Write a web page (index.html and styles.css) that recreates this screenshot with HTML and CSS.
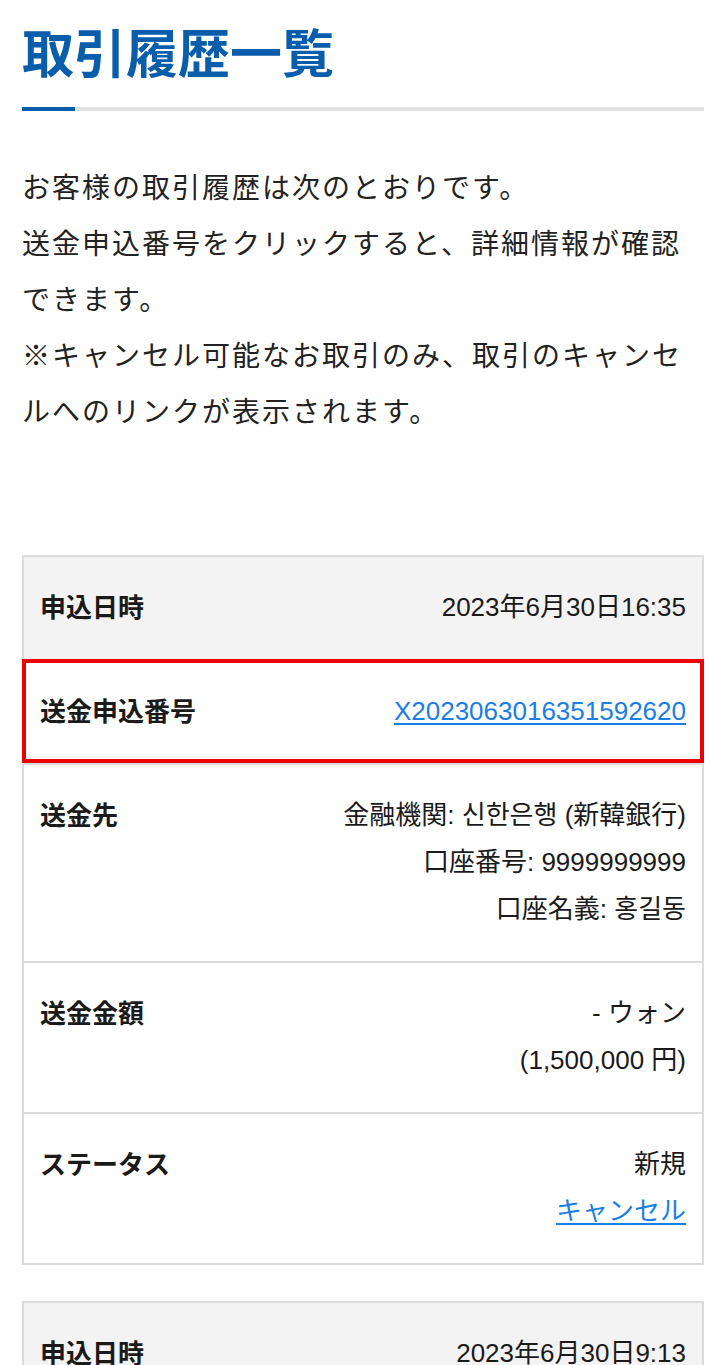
FILE: index.html
```html
<!DOCTYPE html>
<html lang="ja">
<head>
<meta charset="utf-8">
<title>取引履歴一覧</title>
<link rel="stylesheet" href="styles.css">
</head>
<body>
<main class="page">
  <h1 class="title">取引履歴一覧</h1>
  <p class="intro">お客様の取引履歴は次のとおりです。<br>送金申込番号をクリックすると、詳細情報が確認できます。<br>※キャンセル可能なお取引のみ、取引のキャンセルへのリンクが表示されます。</p>

  <section class="card">
    <div class="row row-head">
      <div class="label">申込日時</div>
      <div class="value">2023年6月30日16:35</div>
    </div>
    <div class="row row-marked">
      <div class="label">送金申込番号</div>
      <div class="value"><a href="#" class="link">X2023063016351592620</a></div>
    </div>
    <div class="row">
      <div class="label">送金先</div>
      <div class="value">金融機関: 신한은행 (新韓銀行)<br>口座番号: 9999999999<br>口座名義: 홍길동</div>
    </div>
    <div class="row">
      <div class="label">送金金額</div>
      <div class="value">- ウォン<br>(1,500,000 円)</div>
    </div>
    <div class="row">
      <div class="label">ステータス</div>
      <div class="value">新規<br><a href="#" class="link">キャンセル</a></div>
    </div>
  </section>

  <section class="card">
    <div class="row row-head">
      <div class="label">申込日時</div>
      <div class="value">2023年6月30日9:13</div>
    </div>
  </section>
</main>
</body>
</html>
```

FILE: styles.css
```css
html, body {
  margin: 0;
  padding: 0;
  background: #ffffff;
}

body {
  color: #222222;
  font-family: "Liberation Sans", "Noto Sans CJK JP", sans-serif;
}

.page {
  padding: 0 22px 0 22px;
}

.title {
  position: relative;
  margin: 0;
  padding: 20px 0 25px 0;
  font-family: "Noto Sans CJK JP", sans-serif;
  font-weight: 700;
  font-size: 52px;
  line-height: 62px;
  color: #0a5dab;
  border-bottom: 4px solid #e2e2e2;
  letter-spacing: 0;
}

.title::after {
  content: "";
  position: absolute;
  left: 0;
  bottom: -4px;
  width: 53px;
  height: 4px;
  background: #0a5dab;
}

.intro {
  margin: 47px 0 0 0;
  font-family: "Noto Sans CJK JP", sans-serif;
  font-size: 28px;
  letter-spacing: 2px;
  line-height: 56px;
  color: #222222;
}

.card {
  margin-top: 117px;
  border: 2px solid #dcdcdc;
}

.card + .card {
  margin-top: 36px;
}

.row {
  display: flex;
  justify-content: space-between;
  align-items: flex-start;
  padding: 27px 16px 28px 16px;
  font-size: 26px;
  line-height: 47px;
  border-top: 2px solid #dcdcdc;
}

.row:first-child {
  border-top: none;
}

.row-head {
  background: #f3f3f3;
}

.row-marked {
  position: relative;
}

.row-marked::after {
  content: "";
  position: absolute;
  top: -2px;
  left: -2px;
  right: -2px;
  bottom: 0;
  border: 4px solid #ee0000;
  pointer-events: none;
}

.label {
  flex: none;
  font-family: "Noto Sans CJK JP", sans-serif;
  font-weight: 700;
  color: #1a1a1a;
  position: relative;
  top: -2px;
}

.value {
  flex: 1;
  text-align: right;
  color: #1a1a1a;
}

.link {
  color: #1a7ee5;
  text-decoration: underline;
  text-underline-offset: 3px;
}
```
